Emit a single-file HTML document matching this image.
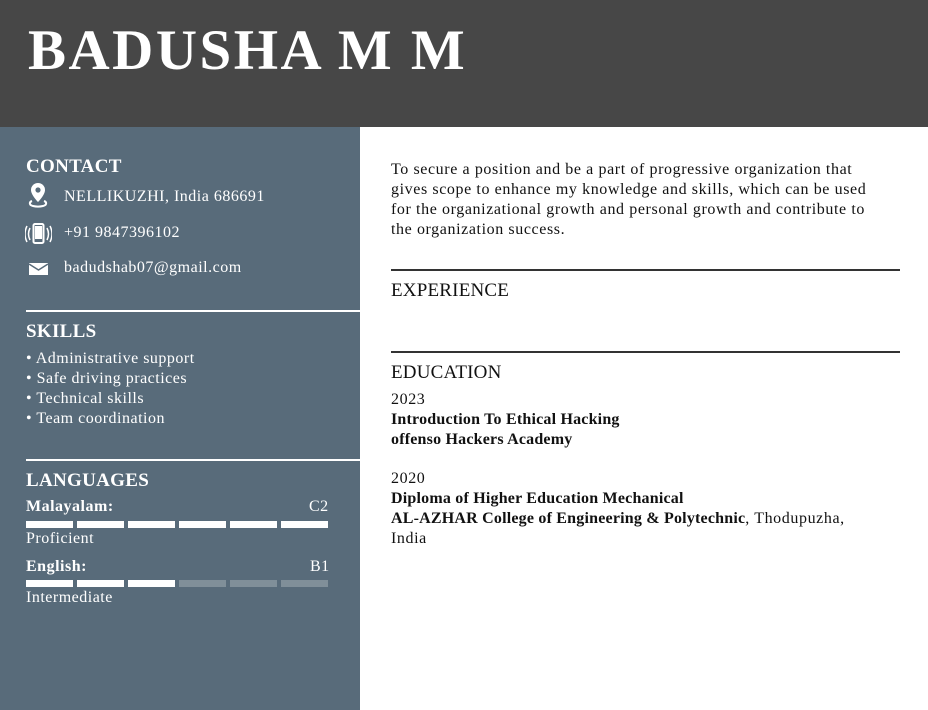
<!DOCTYPE html>
<html><head><meta charset="utf-8"><style>
*{margin:0;padding:0;box-sizing:border-box}
body{width:928px;height:710px;overflow:hidden;background:#fff;font-family:"Liberation Serif",serif;position:relative}
.hdr{position:absolute;left:0;top:0;width:928px;height:127px;background:#474747}
.hdr h1{position:absolute;left:28px;top:20px;color:#fff;font-size:57px;font-weight:bold;letter-spacing:2.5px;line-height:62px}
.side{position:absolute;left:0;top:127px;width:360px;height:583px;background:#586b7a;color:#fff}
.a{position:absolute;white-space:nowrap}
.h{font-size:19px;font-weight:bold;letter-spacing:0.3px}
.t{font-size:16px;letter-spacing:0.5px}
.t b{letter-spacing:0.3px}
.rule{position:absolute;left:26px;width:334px;height:2px;background:#fff}
.bar{position:absolute;height:7px;width:47px;background:#fff}
.dim{background:#808f99}
.main .t{color:#111;font-size:16px;letter-spacing:0.6px}
.main .t b{letter-spacing:0.2px}
.rr{position:absolute;left:391px;width:509px;height:2px;background:#333}
.mh{font-size:19px;color:#111;letter-spacing:0.2px}
</style></head><body>
<div class="hdr"><h1>BADUSHA M M</h1></div>
<div class="side">
<div class="a h" style="left:26px;top:29px">CONTACT</div>
<svg class="a" style="left:28px;top:55px" width="20" height="26" viewBox="0 0 20 26"><path d="M10 1a7 7 0 0 0-7 7c0 5 7 12 7 12s7-7 7-12a7 7 0 0 0-7-7z" fill="#fff"/><circle cx="10" cy="8" r="2.6" fill="#586b7a"/><path d="M4 19c-3 1-3 4 1 5 3 .7 7 .7 10 0 4-1 4-4 1-5" stroke="#fff" stroke-width="2" fill="none"/></svg>
<div class="a t" style="left:64px;top:61px">NELLIKUZHI, India 686691</div>
<svg class="a" style="left:25px;top:96px" width="27" height="22" viewBox="0 0 27 22"><rect x="8.5" y="1" width="10" height="19" rx="1.5" fill="none" stroke="#fff" stroke-width="2"/><rect x="10" y="3" width="7" height="13" fill="#fff"/><path d="M5 5q-3 6 0 12M2 3q-4 8 0 16M22 5q3 6 0 12M25 3q4 8 0 16" stroke="#fff" stroke-width="1.5" fill="none"/></svg>
<div class="a t" style="left:64px;top:97px">+91 9847396102</div>
<svg class="a" style="left:29px;top:136px" width="19" height="12" viewBox="0 0 19 12"><rect width="19" height="12" fill="#fff"/><path d="M0 1l9.5 6L19 1" stroke="#586b7a" stroke-width="1.5" fill="none"/></svg>
<div class="a t" style="left:64px;top:132px">badudshab07@gmail.com</div>
<div class="rule" style="top:183px"></div>
<div class="a h" style="left:26px;top:194px">SKILLS</div>
<div class="a t" style="left:26px;top:222px;line-height:20px">• Administrative support<br>• Safe driving practices<br>• Technical skills<br>• Team coordination</div>
<div class="rule" style="top:332px"></div>
<div class="a h" style="left:26px;top:343px">LANGUAGES</div>
<div class="a t" style="left:26px;top:371px;font-weight:bold">Malayalam:</div>
<div class="a t" style="left:309px;top:371px">C2</div>
<div class="bar" style="left:26px;top:394px"></div><div class="bar" style="left:77px;top:394px"></div><div class="bar" style="left:128px;top:394px"></div><div class="bar" style="left:179px;top:394px"></div><div class="bar" style="left:230px;top:394px"></div><div class="bar" style="left:281px;top:394px"></div>
<div class="a t" style="left:26px;top:403px">Proficient</div>
<div class="a t" style="left:26px;top:431px;font-weight:bold">English:</div>
<div class="a t" style="left:310px;top:431px">B1</div>
<div class="bar" style="left:26px;top:453px"></div><div class="bar" style="left:77px;top:453px"></div><div class="bar" style="left:128px;top:453px"></div><div class="bar dim" style="left:179px;top:453px"></div><div class="bar dim" style="left:230px;top:453px"></div><div class="bar dim" style="left:281px;top:453px"></div>
<div class="a t" style="left:26px;top:462px">Intermediate</div>
</div>
<div class="main">
<div class="a t" style="left:391px;top:160px;line-height:20px">To secure a position and be a part of progressive organization that<br>gives scope to enhance my knowledge and skills, which can be used<br>for the organizational growth and personal growth and contribute to<br>the organization success.</div>
<div class="rr" style="top:269px"></div>
<div class="a mh" style="left:391px;top:280px">EXPERIENCE</div>
<div class="rr" style="top:351px"></div>
<div class="a mh" style="left:391px;top:362px">EDUCATION</div>
<div class="a t" style="left:391px;top:390px;line-height:20px">2023<br><b>Introduction To Ethical Hacking</b><br><b>offenso Hackers Academy</b></div>
<div class="a t" style="left:391px;top:469px;line-height:20px">2020<br><b>Diploma of Higher Education Mechanical</b><br><b>AL-AZHAR College of Engineering &amp; Polytechnic</b>, Thodupuzha,<br>India</div>
</div>
</body></html>
